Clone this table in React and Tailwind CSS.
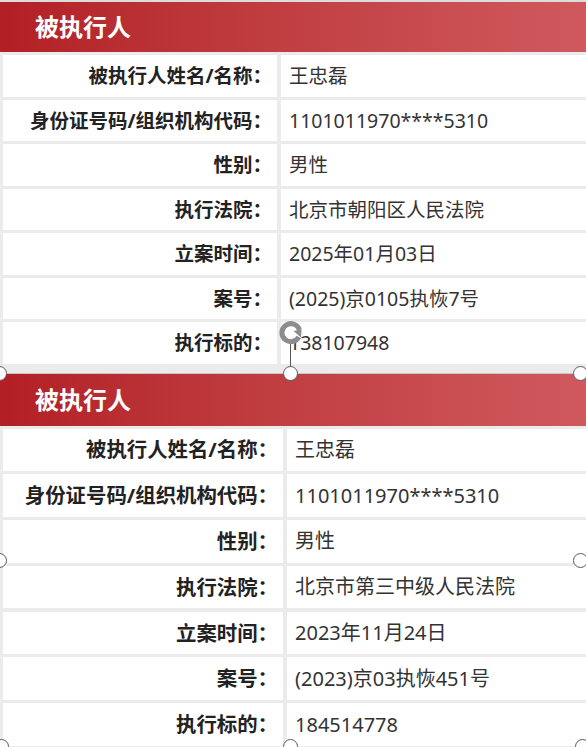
const rows1 = [
  ["被执行人姓名/名称：", "王忠磊"],
  ["身份证号码/组织机构代码：", "1101011970****5310"],
  ["性别：", "男性"],
  ["执行法院：", "北京市朝阳区人民法院"],
  ["立案时间：", "2025年01月03日"],
  ["案号：", "(2025)京0105执恢7号"],
  ["执行标的：", "138107948"],
];

const rows2 = [
  ["被执行人姓名/名称：", "王忠磊"],
  ["身份证号码/组织机构代码：", "1101011970****5310"],
  ["性别：", "男性"],
  ["执行法院：", "北京市第三中级人民法院"],
  ["立案时间：", "2023年11月24日"],
  ["案号：", "(2023)京03执恢451号"],
  ["执行标的：", "184514778"],
];

const font = { fontFamily: '"Noto Sans", "Noto Sans CJK SC", sans-serif' };

const Handle = ({ className }) => (
  <div className={"absolute w-[15px] h-[15px] rounded-full bg-white border border-[#5a5a5a] " + className} />
);

const Block = ({ rows, big }) => (
  <div className="flex flex-col bg-[#ebebeb]">
    <div
      className={
        "flex items-center pl-[35px] bg-gradient-to-r from-[#b21f25] to-[#d0595e] text-white font-bold text-[24px] " +
        (big ? "h-[52px]" : "h-[50px]")
      }
    >
      被执行人
    </div>
    <div className={"flex flex-col pl-[3px] pt-[3px] " + (big ? "gap-[3.3px]" : "gap-[3px]")}>
      {rows.map(([label, value]) => (
        <div key={label} className={"flex gap-[4px] " + (big ? "h-[42.5px]" : "h-[41.5px]")}>
          <div
            className={
              "bg-white flex items-center justify-end font-bold text-[#222] pr-[5px] " +
              (big ? "w-[280px] text-[20.4px]" : "w-[274px] text-[19.5px]")
            }
          >
            {label}
          </div>
          <div
            className={
              "flex-1 bg-white flex items-center text-[#333] pl-[8px] " +
              (big ? "text-[20px]" : "text-[19.5px]")
            }
          >
            {value}
          </div>
        </div>
      ))}
    </div>
  </div>
);

export default function App() {
  return (
    <div className="relative w-[586px] h-[747px] overflow-hidden bg-[#ebebeb]" style={font}>
      <div className="h-[2px] bg-[#dcdcdc]" />
      <Block rows={rows1} />
      <div className="h-[9px] bg-[#ebebeb]" />
      <div className="border-t border-[#c8c8c8]">
        <Block rows={rows2} big />
      </div>

      <div className="absolute left-[290px] top-[343px] w-px h-[25px] bg-[#555]" />
      <svg className="absolute left-[278px] top-[320px]" width="26" height="26" viewBox="0 0 26 26">
        <path
          d="M20.8 17 A9 9 0 1 1 21.5 10"
          fill="white"
          stroke="#8c8c8c"
          strokeWidth="5"
        />
        <path d="M15.5 11 L23.5 9.5 L23 17.5 Z" fill="#8c8c8c" />
      </svg>

      <Handle className="left-[-8px] top-[366px]" />
      <Handle className="left-[283px] top-[366px]" />
      <Handle className="left-[573px] top-[366px]" />
      <Handle className="left-[-8px] top-[553px]" />
      <Handle className="left-[573px] top-[553px]" />
      <Handle className="left-[-6px] top-[739px]" />
      <Handle className="left-[283px] top-[739px]" />
      <Handle className="left-[575px] top-[739px]" />
    </div>
  );
}
